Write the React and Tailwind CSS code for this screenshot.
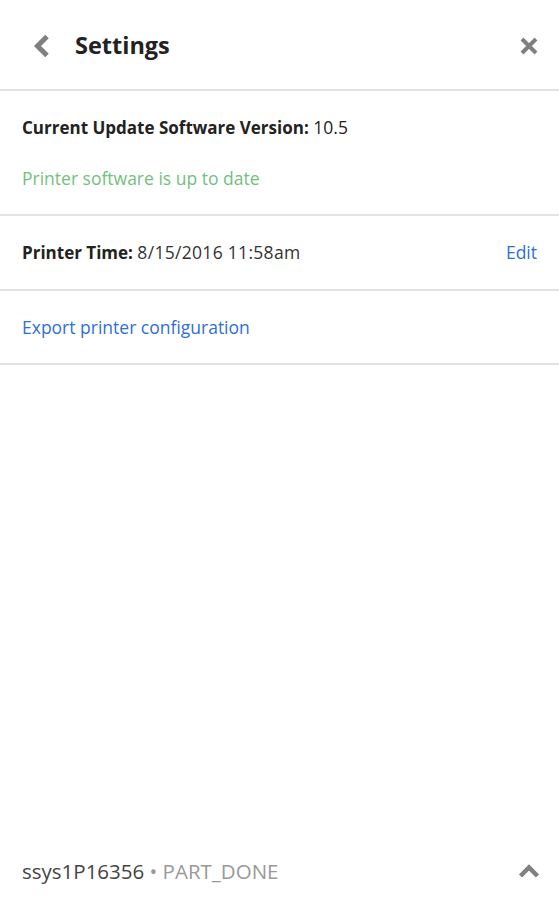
export default function App() {
  return (
    <div className="flex flex-col h-[900px] w-[559px] bg-white text-[#222] font-['Open_Sans',sans-serif]">
      <div className="flex items-center h-[91px] pt-[2px] px-[32px] border-b-2 border-[#e2e2e2]">
        <svg width="18" height="24" viewBox="0 0 18 24" className="mr-[25px]">
          <path d="M15 2.5 L5.5 12 L15 21.5" fill="none" stroke="#808080" strokeWidth="5" />
        </svg>
        <div className="text-[23.5px] font-bold flex-1">Settings</div>
        <svg width="20" height="20" viewBox="0 0 20 20" className="-mr-[12px]">
          <path d="M3 3 L17 17 M17 3 L3 17" stroke="#808080" strokeWidth="4" />
        </svg>
      </div>

      <div className="flex flex-col px-[22px] pt-[24px] pb-[24px] gap-[26px] border-b-2 border-[#e2e2e2] text-[17.5px] leading-[24px]">
        <div>
          <span className="font-bold text-[17px]">Current Update Software Version:</span> 10.5
        </div>
        <div className="text-[#72bf7e]">Printer software is up to date</div>
      </div>

      <div className="flex items-center justify-between h-[75px] px-[22px] border-b-2 border-[#e2e2e2] text-[17px]">
        <div>
          <span className="font-bold">Printer Time:</span> <span className="text-[#333] text-[17.5px] tracking-[0.3px]">8/15/2016 11:58am</span>
        </div>
        <span className="text-[#2f6fd6] text-[17.5px]">Edit</span>
      </div>

      <div className="flex items-center h-[74px] px-[22px] border-b-2 border-[#e2e2e2] text-[17.5px] text-[#2f6fd6]">
        Export printer configuration
      </div>

      <div className="flex-1" />

      <div className="flex items-center justify-between h-[54px] px-[22px] pb-[4px] text-[20.5px]">
        <div>
          <span className="text-[#444]">ssys1P16356</span>
          <span className="text-[#999]"> • PART_DONE</span>
        </div>
        <svg width="22" height="14" viewBox="0 0 22 14" className="mr-[-3px]">
          <path d="M2.5 12 L11 3.5 L19.5 12" fill="none" stroke="#808080" strokeWidth="4.5" />
        </svg>
      </div>
    </div>
  )
}
